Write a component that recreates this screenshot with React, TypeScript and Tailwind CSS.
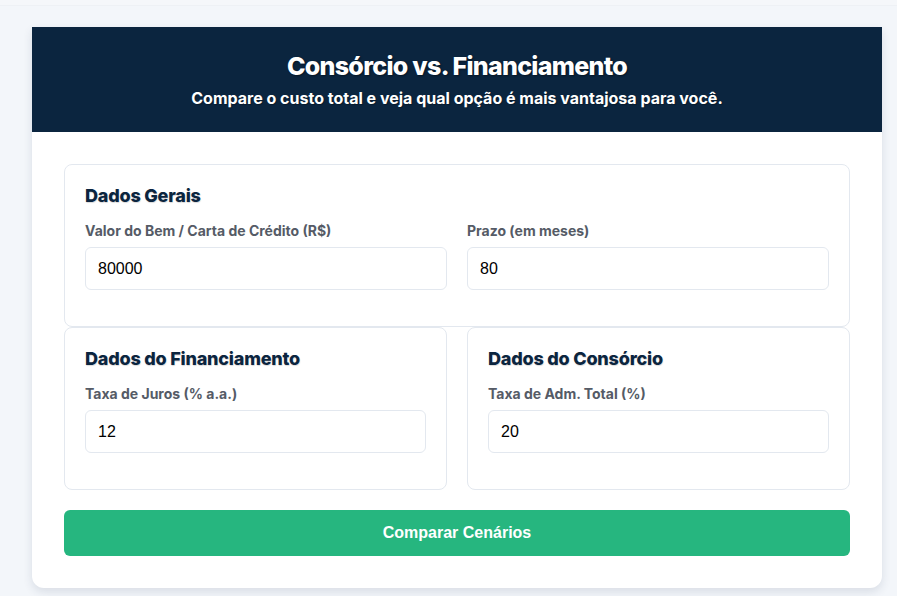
import React from "react";

function Field({ label, value }: { label: string; value: string }) {
  return (
    <div className="flex flex-col mb-4">
      <label className="text-[14px] leading-5 font-bold text-[#555b66] mb-[6px]">{label}</label>
      <input
        defaultValue={value}
        className="h-[43px] w-full rounded-[6px] border border-[#e3e8ef] bg-white px-3 text-[16px] text-black outline-none"
        style={{ fontFamily: '"Liberation Sans", Arial, sans-serif' }}
      />
    </div>
  );
}

function Section({ title, children, className = "" }: { title: string; children: React.ReactNode; className?: string }) {
  return (
    <div className={`rounded-[8px] border border-[#e3e8ef] bg-white p-5 pb-5 ${className}`}>
      <h2 className="text-[18px] leading-[22px] font-extrabold text-[#0b253f] mb-[14px] tracking-[-0.2px] [text-shadow:0.5px_0.5px_1px_rgba(0,0,0,0.15)]">{title}</h2>
      {children}
    </div>
  );
}

export default function App() {
  return (
    <div className="min-h-[596px] w-full bg-[#f3f6fa]" style={{ fontFamily: 'Inter, "Noto Sans", sans-serif' }}>
      <div className="h-[6px] bg-[#f5f7fa] border-b border-[#eef1f5]" />
      <div className="pl-8 pr-[15px] pt-[21px] pb-4">
        <div className="overflow-hidden rounded-b-[12px] bg-white shadow-[0_4px_10px_rgba(30,50,80,0.12)]">
          <div className="h-[105px] bg-[#0b253f] flex flex-col items-center pt-[22px]">
            <h1 className="text-[25px] leading-[34px] font-extrabold text-white tracking-[-0.7px] [text-shadow:1px_1px_2px_rgba(0,0,0,0.45)]">
              Consórcio vs. Financiamento
            </h1>
            <p className="mt-[3px] text-[16px] leading-6 font-bold text-white [text-shadow:1px_1px_1px_rgba(0,0,0,0.3)]">
              Compare o custo total e veja qual opção é mais vantajosa para você.
            </p>
          </div>
          <div className="px-8 pt-8 pb-8">
            <Section title="Dados Gerais">
              <div className="grid grid-cols-2 gap-5">
                <Field label="Valor do Bem / Carta de Crédito (R$)" value="80000" />
                <Field label="Prazo (em meses)" value="80" />
              </div>
            </Section>
            <div className="grid grid-cols-2 gap-5">
              <Section title="Dados do Financiamento">
                <Field label="Taxa de Juros (% a.a.)" value="12" />
              </Section>
              <Section title="Dados do Consórcio">
                <Field label="Taxa de Adm. Total (%)" value="20" />
              </Section>
            </div>
            <button
              className="mt-5 h-[46px] w-full rounded-[6px] bg-[#26b67f] text-white text-[16px] font-bold"
              style={{ fontFamily: '"Liberation Sans", Arial, sans-serif' }}
            >
              Comparar Cenários
            </button>
          </div>
        </div>
      </div>
    </div>
  );
}
